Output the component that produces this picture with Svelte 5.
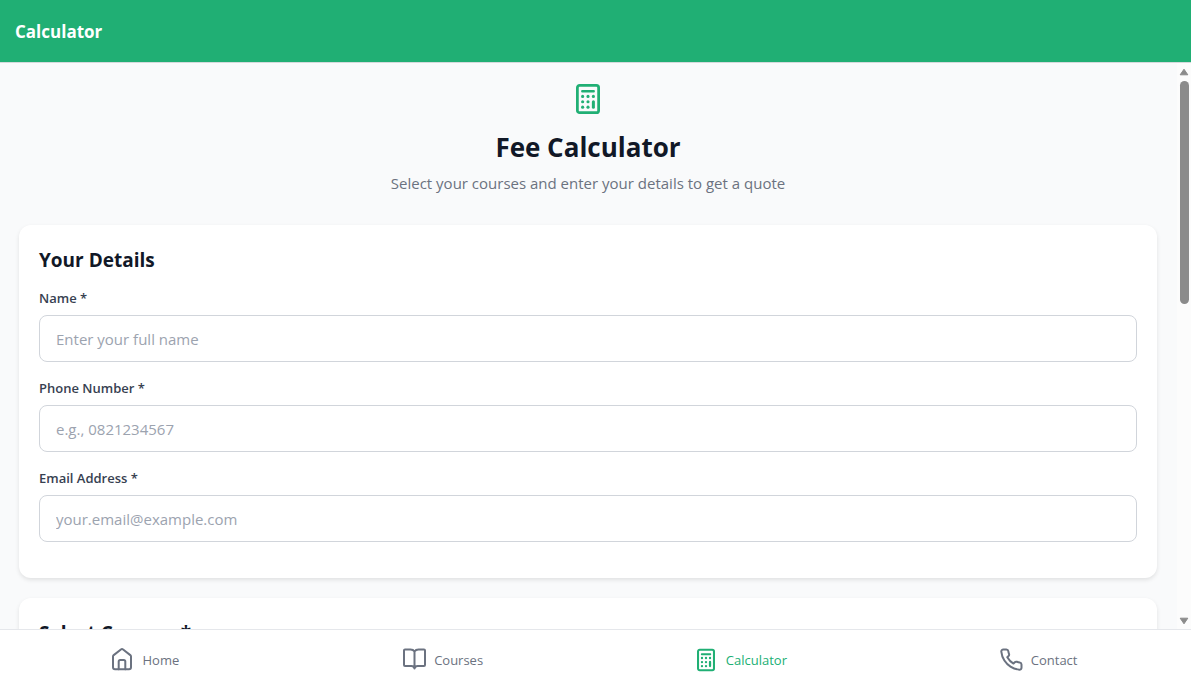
<script>
  const fields = [
    { id: 'name', label: 'Name *', type: 'text', placeholder: 'Enter your full name' },
    { id: 'phone', label: 'Phone Number *', type: 'tel', placeholder: 'e.g., 0821234567' },
    { id: 'email', label: 'Email Address *', type: 'email', placeholder: 'your.email@example.com' }
  ];
  const tabs = ['Home', 'Courses', 'Calculator', 'Contact'];
</script>

{#snippet calculatorIcon()}
  <svg class="icon" viewBox="0 0 512 512" aria-hidden="true">
    <rect x="86" y="38" width="340" height="436" rx="36" fill="none" stroke="currentColor" stroke-width="44" />
    <rect x="146" y="110" width="220" height="42" rx="16" fill="currentColor" />
    {#each [[170, 214], [256, 214], [342, 214], [170, 300], [256, 300], [170, 386], [256, 386]] as [x, y]}
      <circle cx={x} cy={y} r="25" fill="currentColor" />
    {/each}
    <rect x="318" y="274" width="48" height="136" rx="24" fill="currentColor" />
  </svg>
{/snippet}

<div class="app">
  <header>Calculator</header>

  <div class="body">
    <main>
      <div class="intro">
        {@render calculatorIcon()}
        <h1>Fee Calculator</h1>
        <p>Select your courses and enter your details to get a quote</p>
      </div>

      <section>
        <h2>Your Details</h2>
        {#each fields as field}
          <div class="field">
            <label for={field.id}>{field.label}</label>
            <input id={field.id} type={field.type} placeholder={field.placeholder} />
          </div>
        {/each}
      </section>

      <section>
        <h2>Select Courses *</h2>
      </section>
    </main>
    <div class="scrollbar" aria-hidden="true">
      <svg class="arrow" viewBox="0 0 10 8"><path d="M5 1.2 8.8 6.8H1.2z" /></svg>
      <div class="track"><div class="thumb"></div></div>
      <svg class="arrow" viewBox="0 0 10 8"><path d="M5 6.8 8.8 1.2H1.2z" /></svg>
    </div>
  </div>

  <nav>
    {#each tabs as tab}
      <a href={'#' + tab.toLowerCase()} class:active={tab === 'Calculator'}>
        {#if tab === 'Calculator'}
          {@render calculatorIcon()}
        {:else}
          <svg class="icon line" viewBox="0 0 24 24" aria-hidden="true">
            {#if tab === 'Home'}
              <path d="M2 8.600a2 2 0 0 1 .7-1.500l7.200-5.600a1.800 1.800 0 0 1 2.200 0l7.200 5.600a2 2 0 0 1 .7 1.500V19.300a2 2 0 0 1-2 2h-14a2 2 0 0 1-2-2z" />
              <path d="M7.700 21.300v-7.800a1.500 1.500 0 0 1 1.500-1.500h3.600a1.500 1.500 0 0 1 1.500 1.500v7.800" />
            {:else if tab === 'Courses'}
              <path d="M12.500 3.500C11.500 1.900 10.200 1.500 8.500 1.500H3a1 1 0 0 0-1 1V17a1 1 0 0 0 1 1h6.500c1.700 0 2.500.6 3 2.500.5-1.900 1.300-2.500 3-2.500H22a1 1 0 0 0 1-1V2.500a1 1 0 0 0-1-1h-5.500c-1.700 0-3 .4-4 2zM12.500 3.500v17" />
            {:else}
              <path d="M22.500 16.500v3.200a2 2 0 0 1-2.200 2 20 20 0 0 1-8.800-3.100 20 20 0 0 1-6.100-6.100 20 20 0 0 1-3.100-8.900A2 2 0 0 1 4.300 1.400h3a2 2 0 0 1 2 1.720 12.840 12.840 0 0 0 .7 2.810 2 2 0 0 1-.45 2.110L8.290 9.310a16 16 0 0 0 6.200 6.200l1.270-1.270a2 2 0 0 1 2.110-.45 12.840 12.840 0 0 0 2.910.7A2 2 0 0 1 22.500 16.500z" />
            {/if}
          </svg>
        {/if}
        <span>{tab}</span>
      </a>
    {/each}
  </nav>
</div>

<style>
  :global(body) {
    margin: 0;
  }
  .app {
    display: flex;
    flex-direction: column;
    height: 100vh;
    overflow: hidden;
    background: #f9fafb;
    color: #111827;
    font-family: 'Segoe UI', 'Open Sans', 'Noto Sans', sans-serif;
  }
  .app, .app * {
    box-sizing: border-box;
  }
  header {
    flex: none;
    padding: 20px 15px 18px;
    border-bottom: 1px solid #d5d9dc;
    background: #20af74;
    color: #fff;
    font-size: 17px;
    font-weight: 700;
    line-height: 24px;
  }
  .body {
    display: flex;
    flex: 1;
    min-height: 0;
  }
  main {
    flex: 1;
    min-width: 0;
    padding: 20px 20px 0 19px;
    overflow: hidden;
  }
  .intro {
    display: flex;
    flex-direction: column;
    align-items: center;
    padding-bottom: 31px;
    color: #20af74;
  }
  .icon {
    flex: none;
    width: 24px;
    height: 24px;
  }
  .intro .icon {
    width: 32px;
    height: 32px;
  }
  .line {
    fill: none;
    stroke: currentColor;
    stroke-width: 2;
    stroke-linecap: round;
    stroke-linejoin: round;
  }
  h1, h2, p {
    margin: 0;
  }
  h1 {
    margin-top: 12px;
    color: #111827;
    font-size: 26px;
    line-height: 40px;
  }
  p {
    margin-top: 5px;
    color: #6b7280;
    font-size: 15px;
    line-height: 22px;
  }
  section {
    margin-bottom: 20px;
    padding: 20px 20px 19px;
    border-radius: 12px;
    background: #fff;
    box-shadow: 0 2px 4px rgb(0 0 0 / 10%);
  }
  h2 {
    margin-bottom: 14px;
    font-size: 19px;
    line-height: 30px;
  }
  .field {
    display: flex;
    flex-direction: column;
    gap: 7px;
    margin-bottom: 17px;
  }
  label {
    color: #374151;
    font-size: 13px;
    font-weight: 600;
    line-height: 19px;
  }
  input {
    width: 100%;
    height: 47px;
    padding: 0 16px;
    border: 1px solid #d1d5db;
    border-radius: 8px;
    background: #fff;
    color: #111827;
    font: inherit;
    font-size: 15px;
  }
  input::placeholder {
    color: #9ca3af;
  }
  .scrollbar {
    display: flex;
    flex: none;
    flex-direction: column;
    align-items: center;
    width: 14px;
    padding: 5px 0 4px;
    background: #fcfcfc;
  }
  .arrow {
    width: 10px;
    height: 8px;
    fill: #8b8b8b;
    stroke: #8b8b8b;
    stroke-linejoin: round;
  }
  .track {
    flex: 1;
    width: 9px;
    padding: 5px 0 4px;
  }
  .thumb {
    height: 42%;
    border-radius: 5px;
    background: #8b8b8b;
  }
  nav {
    display: flex;
    flex: none;
    height: 59px;
    border-top: 1px solid #e5e7eb;
    background: #fff;
  }
  a {
    display: flex;
    flex: 1;
    align-items: center;
    justify-content: center;
    gap: 8px;
    padding: 2px 8px 0 0;
    color: #6b7280;
    font-size: 13px;
    font-weight: 500;
    line-height: 20px;
    text-decoration: none;
  }
  .active {
    color: #20af74;
  }
</style>
